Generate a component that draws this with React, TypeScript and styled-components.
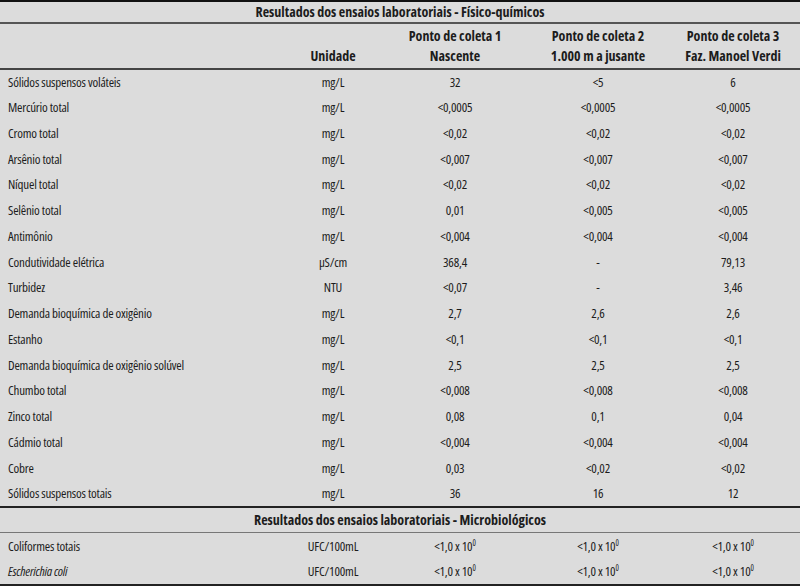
import React from 'react';
import styled, { createGlobalStyle } from 'styled-components';

const GlobalStyle = createGlobalStyle`
  html, body {
    margin: 0;
    padding: 0;
    background: #ffffff;
  }
  body {
    font-family: "Open Sans", "DejaVu Sans Condensed", sans-serif;
    font-stretch: 75%;
    color: #1c1c1c;
  }
`;

const Table = styled.table`
  width: 800px;
  border-collapse: collapse;
  table-layout: fixed;
  background: #dcdcdc;
  border-top: 2px solid #111;
  border-bottom: 2px solid #222;
  font-size: 13px;
  font-weight: 500;
  letter-spacing: -0.2px;
  line-height: 16px;
`;

const Col = styled.col<{ $w: number }>`
  width: ${(p) => p.$w}px;
`;

const SectionRow = styled.tr<{ $thick?: boolean }>`
  height: ${(p) => (p.$thick ? '26px' : '22px')};
  border-top: ${(p) => (p.$thick ? '2px solid #222' : 'none')};
  border-bottom: ${(p) => (p.$thick ? '1px solid #777' : '2px solid #555')};
`;

const SectionCell = styled.th`
  padding: 0 0 1px;
  text-align: center;
  font-weight: bold;
  font-size: 14px;
  letter-spacing: 0;
  vertical-align: middle;
`;

const HeadRow = styled.tr`
  height: 46px;
  border-bottom: 2px solid #444;
`;

const HeadCell = styled.th`
  padding: 0 0 2px;
  text-align: center;
  vertical-align: bottom;
  font-weight: bold;
  font-size: 14px;
  letter-spacing: 0;
  line-height: 20px;
`;

const Row = styled.tr<{ $h?: number }>`
  height: ${(p) => p.$h ?? 25.75}px;
`;

const Label = styled.td<{ $italic?: boolean }>`
  padding: 0 0 1px 8px;
  text-align: left;
  font-style: ${(p) => (p.$italic ? 'italic' : 'normal')};
  white-space: nowrap;
`;

const Cell = styled.td`
  padding: 0 0 1px;
  text-align: center;
  white-space: nowrap;
`;

const Sup = styled.sup`
  font-size: 8px;
  vertical-align: 5px;
  line-height: 0;
  letter-spacing: 0;
`;

type Entry = [string, string, string, string, string];

const physical: Entry[] = [
  ['Sólidos suspensos voláteis', 'mg/L', '32', '<5', '6'],
  ['Mercúrio total', 'mg/L', '<0,0005', '<0,0005', '<0,0005'],
  ['Cromo total', 'mg/L', '<0,02', '<0,02', '<0,02'],
  ['Arsênio total', 'mg/L', '<0,007', '<0,007', '<0,007'],
  ['Níquel total', 'mg/L', '<0,02', '<0,02', '<0,02'],
  ['Selênio total', 'mg/L', '0,01', '<0,005', '<0,005'],
  ['Antimônio', 'mg/L', '<0,004', '<0,004', '<0,004'],
  ['Condutividade elétrica', 'µS/cm', '368,4', '-', '79,13'],
  ['Turbidez', 'NTU', '<0,07', '-', '3,46'],
  ['Demanda bioquímica de oxigênio', 'mg/L', '2,7', '2,6', '2,6'],
  ['Estanho', 'mg/L', '<0,1', '<0,1', '<0,1'],
  ['Demanda bioquímica de oxigênio solúvel', 'mg/L', '2,5', '2,5', '2,5'],
  ['Chumbo total', 'mg/L', '<0,008', '<0,008', '<0,008'],
  ['Zinco total', 'mg/L', '0,08', '0,1', '0,04'],
  ['Cádmio total', 'mg/L', '<0,004', '<0,004', '<0,004'],
  ['Cobre', 'mg/L', '0,03', '<0,02', '<0,02'],
  ['Sólidos suspensos totais', 'mg/L', '36', '16', '12'],
];

const micro = [
  { name: 'Coliformes totais', italic: false },
  { name: 'Escherichia coli', italic: true },
];

const Power = () => (
  <>
    {'<1,0 x 10'}
    <Sup>0</Sup>
  </>
);

const App = () => (
  <>
    <GlobalStyle />
    <Table>
      <colgroup>
        <Col $w={286} />
        <Col $w={94} />
        <Col $w={150} />
        <Col $w={136} />
        <Col $w={134} />
      </colgroup>
      <thead>
        <SectionRow>
          <SectionCell colSpan={5}>Resultados dos ensaios laboratoriais - Físico-químicos</SectionCell>
        </SectionRow>
        <HeadRow>
          <HeadCell />
          <HeadCell>Unidade</HeadCell>
          <HeadCell>
            Ponto de coleta 1<br />Nascente
          </HeadCell>
          <HeadCell>
            Ponto de coleta 2<br />1.000 m a jusante
          </HeadCell>
          <HeadCell>
            Ponto de coleta 3<br />Faz. Manoel Verdi
          </HeadCell>
        </HeadRow>
      </thead>
      <tbody>
        {physical.map(([name, unit, a, b, c]) => (
          <Row key={name}>
            <Label>{name}</Label>
            <Cell>{unit}</Cell>
            <Cell>{a}</Cell>
            <Cell>{b}</Cell>
            <Cell>{c}</Cell>
          </Row>
        ))}
        <SectionRow $thick>
          <SectionCell colSpan={5}>Resultados dos ensaios laboratoriais - Microbiológicos</SectionCell>
        </SectionRow>
        {micro.map((m) => (
          <Row key={m.name} $h={26}>
            <Label $italic={m.italic}>{m.name}</Label>
            <Cell>UFC/100mL</Cell>
            <Cell>
              <Power />
            </Cell>
            <Cell>
              <Power />
            </Cell>
            <Cell>
              <Power />
            </Cell>
          </Row>
        ))}
      </tbody>
    </Table>
  </>
);

export default App;
